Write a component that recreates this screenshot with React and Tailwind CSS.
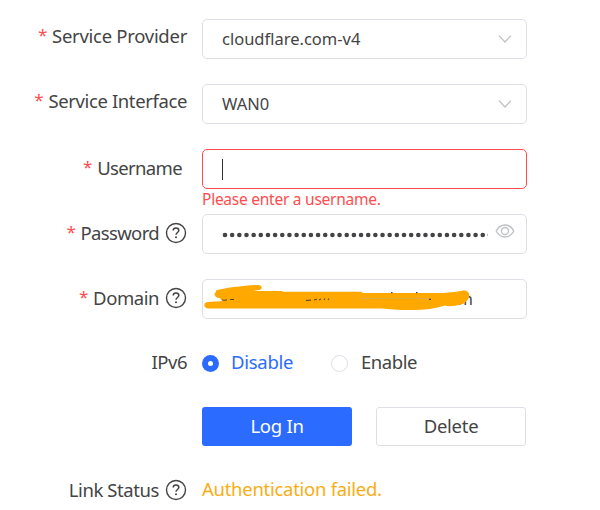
import React from 'react';

function Star() {
  return <span className="relative -top-px mr-[5px] text-[17px] leading-[26px] text-[#ff4d4f]">*</span>;
}

function Help() {
  return (
    <svg className="ml-[6px] h-[22px] w-[22px] shrink-0" viewBox="0 0 22 22" fill="none" stroke="#444446" strokeWidth="1.4">
      <circle cx="11" cy="11" r="9.5" />
      <path d="M8.2 8.6c0-1.7 1.2-2.7 2.8-2.7s2.8 1 2.8 2.5c0 2-2.8 2.2-2.8 4.4" strokeWidth="1.5" />
      <circle cx="11" cy="15.2" r="1" fill="#444446" stroke="none" />
    </svg>
  );
}

function Label({ text, required, help, className = '', textClass = '' }) {
  return (
    <div className={`flex w-[187px] shrink-0 items-center justify-end whitespace-nowrap ${className}`}>
      {required && <Star />}
      <span className={`leading-[26px] ${textClass}`}>{text}</span>
      {help && <Help />}
    </div>
  );
}

function Chevron() {
  return (
    <svg className="h-[10px] w-[14px]" viewBox="0 0 14 10" fill="none" stroke="#bfc1c5" strokeWidth="1.3">
      <path d="M1 1.6 7 8l6-6.4" />
    </svg>
  );
}

const box = 'ml-[15px] flex h-10 w-[325px] shrink-0 items-center rounded-[5px] border bg-white pl-[19px] text-[16.5px] tracking-normal';

export default function App() {
  return (
    <div className="flex h-[510px] w-[600px] flex-col overflow-hidden bg-white pt-[19px] font-['Noto_Sans','Open_Sans',sans-serif] text-[18.5px] tracking-[-0.28px] text-[#444446]">
      <div className="mb-[25px] flex h-10">
        <Label text="Service Provider" required className="pb-[6px]" />
        <div className={`${box} justify-between border-[#dcdfe6] pr-[14px]`}>
          <span>cloudflare.com-v4</span>
          <Chevron />
        </div>
      </div>
      <div className="mb-[25px] flex h-10">
        <Label text="Service Interface" required className="pb-[6px]" textClass="tracking-[-0.38px]" />
        <div className={`${box} justify-between border-[#dcdfe6] pr-[14px]`}>
          <span>WAN0</span>
          <Chevron />
        </div>
      </div>
      <div className="flex h-10">
        <Label text="Username" required className="pr-[5px] pb-[2px]" textClass="tracking-[-0.65px]" />
        <div className={`${box} border-[#ff4d4f]`}>
          <span className="h-[21px] w-px bg-[#303133]" />
        </div>
      </div>
      <div className="h-[25px] whitespace-nowrap pl-[202px] text-[15.5px] leading-[20px] tracking-[-0.25px] text-[#ff4d4f]">
        Please enter a username.
      </div>
      <div className="mb-[25px] flex h-10">
        <Label text="Password" required help className="pb-[3px]" textClass="tracking-[-0.65px]" />
        <div className={`${box} border-[#dcdfe6]`}>
          <svg className="mt-[2px] h-[6px] w-[266px]" viewBox="0 0 266 6" fill="#444446">
            {Array.from({ length: 38 }, (_, i) => (
              <circle key={i} cx={3 + i * 7.16} cy="3" r="2.3" />
            ))}
          </svg>
          <svg className="mb-[6px] ml-[7px] h-[14px] w-[20px]" viewBox="0 0 20 14" fill="none" stroke="#bfc1c5" strokeWidth="1.3">
            <path d="M1.2 7C3.2 3 6.2 1 10 1s6.800 2 8.800 6c-2 4-5 6-8.800 6S3.200 11 1.200 7Z" />
            <circle cx="10" cy="7" r="3.500" />
          </svg>
        </div>
      </div>
      <div className="flex h-10">
        <Label text="Domain" required help className="pb-[3px]" textClass="tracking-[-0.45px]" />
        <div className={`${box} relative border-[#dcdfe6]`}>
          <span className="w-[251px] text-right">.com</span>
          <svg className="absolute -left-px -top-px h-10 w-[325px]" viewBox="202 279 325 40">
            <path
              fill="#ffa900"
              d="M216 290.500C224 288 245 285.500 258 285c4-.2 5 4 1.500 5l-7 1H282l1 .8h78l2 1.200h80c7-.3 15-1.500 20-2.500 4-.5 7 2.500 6 6-1 4-4 7-8 8-6 1.500-12 2.500-16 1-10 3.500-24 4.800-38 4.500-14 0-20-1.200-28-1.500H208c-4.500-.5-5-6-.5-6.600l16-.9c-2-.5-3-1.500-3.500-3-5 .5-7-4.500-4-6Z"
            />
            <path
              d="M222 300l3 .3 2-.5M230 299.500h4M306 300.500l5-.4M314 300l3-.8M319 300l2-1M324 300l1-1.500M328 300l1-1.500"
              fill="none"
              stroke="#5d4a20"
              strokeWidth="1.100"
            />
            <path d="M361 298.500h69" fill="none" stroke="#d5a75b" strokeWidth=".8" strokeDasharray="5 1" />
            <path d="M391 292.600h1.500M416 292.600h1.500M429 299.300h2" stroke="#444446" strokeWidth="1.300" />
          </svg>
        </div>
      </div>
      <div className="mt-[24px] flex h-10 items-center">
        <Label text="IPv6" className="pb-[2px]" textClass="tracking-[-0.5px]" />
        <span className="ml-[15px] flex h-[17px] w-[17px] items-center justify-center rounded-full bg-[#2b6bff]">
          <span className="h-[5px] w-[5px] rounded-full bg-white" />
        </span>
        <span className="ml-[12px] w-[100px] pb-[2px] text-[#2b6bff]">Disable</span>
        <span className="mr-[13px] h-[17px] w-[17px] rounded-full border border-[#dcdfe6]" />
        <span className="pb-[2px] tracking-[-0.45px]">Enable</span>
      </div>
      <div className="mt-[24px] flex gap-6 pl-[202px]">
        <button className="h-[39px] w-[150px] rounded-[3px] bg-[#2b6bff] pb-[2px] text-white">Log In</button>
        <button className="h-[39px] w-[150px] rounded-[3px] border border-[#dcdfe6] pb-[2px]">Delete</button>
      </div>
      <div className="mt-[24px] flex h-10 items-center whitespace-nowrap">
        <Label text="Link Status" help textClass="tracking-[-0.42px]" />
        <span className="mb-[3px] ml-[15px] text-[#faad14]">Authentication failed.</span>
      </div>
    </div>
  );
}
